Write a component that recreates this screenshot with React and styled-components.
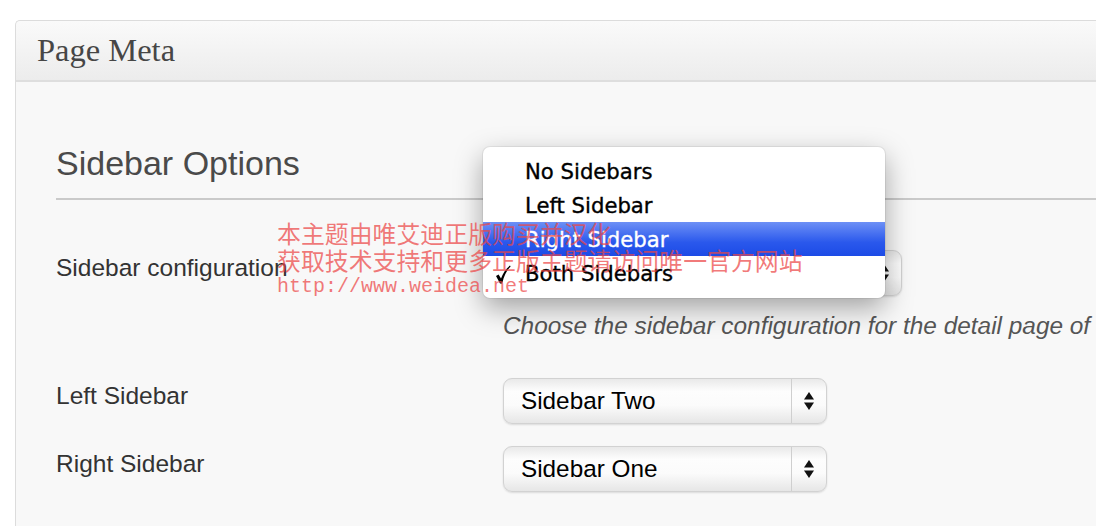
import React from "react";
import styled, { createGlobalStyle } from "styled-components";

const Global = createGlobalStyle`
  html, body { margin: 0; padding: 0; background: #ffffff; overflow: hidden; }
  body { font-family: "Liberation Sans", Arial, sans-serif; }
`;

const Page = styled.div`
  position: relative;
  width: 1096px;
  height: 526px;
  overflow: hidden;
  padding: 20px 0 0 15px;
  box-sizing: border-box;
`;

const Panel = styled.section`
  width: 1120px;
  border: 1px solid #dcdcdc;
  border-right: none;
  border-top-left-radius: 5px;
  background: #f8f8f8;
  box-sizing: border-box;
`;

const PanelHeader = styled.header`
  height: 59px;
  display: flex;
  align-items: center;
  padding-left: 21px;
  background: linear-gradient(to bottom, #fafafa, #ececec);
  border-bottom: 2px solid #dedede;
  border-top-left-radius: 5px;
`;

const PanelTitle = styled.h2`
  margin: 0;
  font-family: "Liberation Serif", Georgia, serif;
  font-weight: 400;
  font-size: 32.5px;
  color: #464646;
`;

const PanelBody = styled.div`
  padding: 61px 0 40px 40px;
`;

const SectionTitle = styled.h3`
  margin: 0;
  font-weight: 400;
  font-size: 34px;
  line-height: 40px;
  color: #4a4a4a;
  padding-bottom: 15px;
  border-bottom: 2px solid #cacaca;
`;

const Form = styled.div`
  display: grid;
  grid-template-columns: 447px 1fr;
  row-gap: 22px;
  margin-top: 50px;
`;

const Label = styled.div`
  font-size: 24.5px;
  line-height: 30px;
  padding-top: 3px;
  color: #333;
  white-space: nowrap;
`;

const Field = styled.div`
  position: relative;
  min-width: 0;
`;

const Select = styled.div`
  position: relative;
  width: ${(p) => p.$width}px;
  height: 46px;
  box-sizing: border-box;
  display: flex;
  align-items: center;
  border: 1px solid #d2d2d2;
  border-radius: 9px;
  background: linear-gradient(
    to bottom,
    #e9e9e9 0%,
    #fdfdfd 28%,
    #fbfbfb 60%,
    #e6e6e6 100%
  );
  box-shadow: 0 1px 2px rgba(0, 0, 0, 0.12);
`;

const SelectText = styled.span`
  flex: 1;
  padding-left: 17px;
  font-size: 24.3px;
  color: #000;
  white-space: nowrap;
`;

const SelectArrows = styled.span`
  width: 34px;
  height: 100%;
  border-left: 1px solid #cfcfcf;
  display: flex;
  align-items: center;
  justify-content: center;
`;

const Help = styled.div`
  margin-top: 15px;
  margin-bottom: 15px;
  font-size: 24.4px;
  line-height: 30px;
  font-style: italic;
  color: #555;
  white-space: nowrap;
`;

const Menu = styled.ul`
  position: absolute;
  left: -21px;
  top: -104px;
  width: 402px;
  margin: 0;
  padding: 7px 0 8px;
  list-style: none;
  background: #fff;
  border-radius: 7px;
  box-shadow: 0 0 0 1px rgba(0, 0, 0, 0.06), 0 10px 28px rgba(0, 0, 0, 0.35);
  z-index: 2;
  box-sizing: border-box;
`;

const MenuItem = styled.li`
  position: relative;
  height: 34px;
  display: flex;
  align-items: center;
  padding-left: 42px;
  font-family: "DejaVu Sans", "Lucida Grande", sans-serif;
  font-size: 21.2px;
  -webkit-text-stroke: 0.35px ${(p) => (p.$active ? "#fff" : "#000")};
  color: ${(p) => (p.$active ? "#fff" : "#000")};
  background: ${(p) =>
    p.$active ? "linear-gradient(to bottom, #6d90f6, #2a58ec 60%, #1c4be6)" : "transparent"};
`;

const CheckMark = styled.svg`
  position: absolute;
  left: 12px;
  top: 9px;
`;

const Watermark = styled.div`
  position: absolute;
  left: 277px;
  top: 219px;
  z-index: 5;
  color: rgba(236, 70, 70, 0.72);
  pointer-events: none;
`;

const WmLine = styled.div`
  font-family: "Noto Sans CJK SC", sans-serif;
  font-size: 23.9px;
  line-height: 27px;
  height: 27px;
  white-space: nowrap;
`;

const WmUrl = styled.div`
  font-family: "Liberation Mono", "DejaVu Sans Mono", monospace;
  font-size: 20px;
  line-height: 28px;
  white-space: nowrap;
`;

const Arrows = () => (
  <svg width="12" height="20" viewBox="0 0 12 20">
    <path d="M6 1 L11 8.5 L1 8.5 Z" fill="#111" />
    <path d="M6 19 L11 11.5 L1 11.5 Z" fill="#111" />
  </svg>
);

const Check = () => (
  <CheckMark width="16" height="19" viewBox="0 0 16 19">
    <path
      d="M1 11 L3.6 9.4 L6 13.6 C8 8.4 10.8 3.8 15 0.6 L15.6 1.4 C11.6 5.4 9 10.6 7.2 18.4 L5 18.4 Z"
      fill="#000"
    />
  </CheckMark>
);

const options = ["No Sidebars", "Left Sidebar", "Right Sidebar", "Both Sidebars"];

export default function App() {
  return (
    <>
      <Global />
      <Page>
        <Panel>
          <PanelHeader>
            <PanelTitle>Page Meta</PanelTitle>
          </PanelHeader>
          <PanelBody>
            <SectionTitle>Sidebar Options</SectionTitle>
            <Form>
              <Label>Sidebar configuration</Label>
              <Field>
                <Select $width={399}>
                  <SelectText>Both Sidebars</SelectText>
                  <SelectArrows>
                    <Arrows />
                  </SelectArrows>
                  <Menu>
                    {options.map((o) => (
                      <MenuItem key={o} $active={o === "Right Sidebar"}>
                        {o === "Both Sidebars" && <Check />}
                        {o}
                      </MenuItem>
                    ))}
                  </Menu>
                </Select>
                <Help>Choose the sidebar configuration for the detail page of this post</Help>
              </Field>

              <Label>Left Sidebar</Label>
              <Field>
                <Select $width={324}>
                  <SelectText>Sidebar Two</SelectText>
                  <SelectArrows>
                    <Arrows />
                  </SelectArrows>
                </Select>
              </Field>

              <Label>Right Sidebar</Label>
              <Field>
                <Select $width={324}>
                  <SelectText>Sidebar One</SelectText>
                  <SelectArrows>
                    <Arrows />
                  </SelectArrows>
                </Select>
              </Field>
            </Form>
          </PanelBody>
        </Panel>
        <Watermark>
          <WmLine>本主题由唯艾迪正版购买并汉化</WmLine>
          <WmLine>获取技术支持和更多正版主题请访问唯一官方网站</WmLine>
          <WmUrl>http://www.weidea.net</WmUrl>
        </Watermark>
      </Page>
    </>
  );
}
